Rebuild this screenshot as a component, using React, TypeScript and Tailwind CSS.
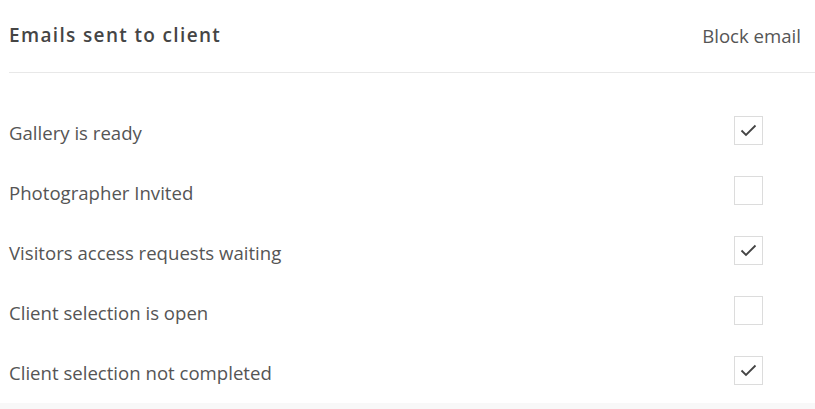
import React, { useState } from 'react';

const rows = [
  { label: 'Gallery is ready', blocked: true },
  { label: 'Photographer Invited', blocked: false },
  { label: 'Visitors access requests waiting', blocked: true },
  { label: 'Client selection is open', blocked: false },
  { label: 'Client selection not completed', blocked: true },
];

const Check = ({ on, onClick }: { on: boolean; onClick: () => void }) => (
  <button
    onClick={onClick}
    className="w-[29px] h-[29px] border border-[#dcdcdc] bg-white flex items-center justify-center"
  >
    {on && (
      <svg width="17" height="13" viewBox="0 0 17 13" fill="none">
        <path d="M1.5 6.5 L6 11 L15.5 1.5" stroke="#444" strokeWidth="1.8" />
      </svg>
    )}
  </button>
);

export default function App() {
  const [state, setState] = useState(rows.map((r) => r.blocked));

  return (
    <div className="w-[815px] h-[409px] bg-white font-['Open_Sans',sans-serif] flex flex-col">
      <div className="pl-[9px]">
        <div className="h-[73px] flex items-center justify-between border-b border-[#e8e8e8] pr-[14px] pb-[1px]">
          <h2 className="text-[19px] font-semibold tracking-[1.35px] text-[#454545]">Emails sent to client</h2>
          <span className="text-[18.6px] text-[#555]">Block email</span>
        </div>
        <div className="pt-[27px] pb-[3px]">
          {rows.map((r, i) => (
            <div key={r.label} className="h-[60px] flex items-center justify-between pr-[52px]">
              <span className="text-[18.6px] text-[#555] pt-[5px]">{r.label}</span>
              <Check on={state[i]} onClick={() => setState(state.map((v, j) => (j === i ? !v : v)))} />
            </div>
          ))}
        </div>
      </div>
      <div className="flex-1 bg-[#f8f8f8]" />
    </div>
  );
}
